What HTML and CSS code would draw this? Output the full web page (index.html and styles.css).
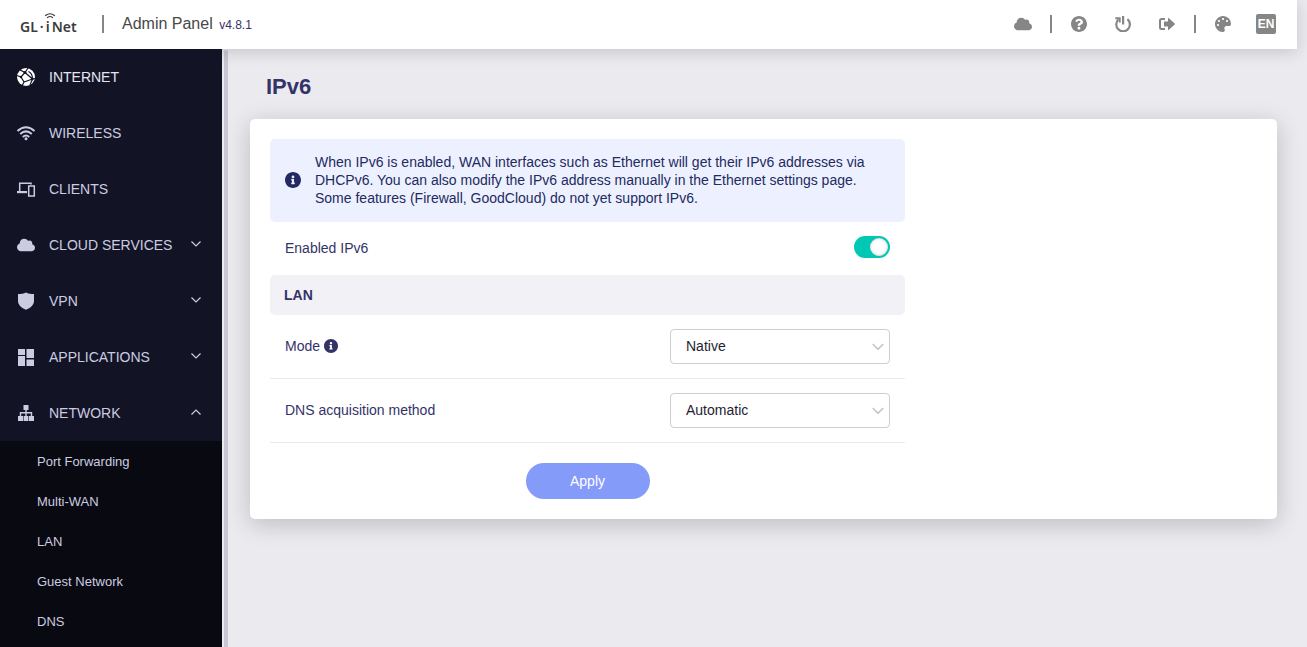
FILE: index.html
```html
<!DOCTYPE html>
<html lang="en">
<head>
<meta charset="utf-8">
<title>GL-iNet Admin Panel</title>
<link rel="stylesheet" href="styles.css">
</head>
<body>
<svg class="sprite" aria-hidden="true">
  <symbol id="cloud" viewBox="0 0 640 512"><path d="M537.6 226.6c4.1-10.7 6.4-22.4 6.4-34.6 0-53-43-96-96-96-19.7 0-38.1 6-53.3 16.2C367 64.2 315.3 32 256 32c-88.4 0-160 71.6-160 160 0 2.7.1 5.4.2 8.1C40.2 219.8 0 273.2 0 336c0 79.5 64.5 144 144 144h368c70.7 0 128-57.3 128-128 0-61.9-44-113.6-102.4-125.4z"/></symbol>
  <symbol id="info" viewBox="8 8 496 496"><path d="M256 8C119.043 8 8 119.083 8 256c0 136.997 111.043 248 248 248s248-111.003 248-248C504 119.083 392.957 8 256 8zm0 110c23.196 0 42 18.804 42 42s-18.804 42-42 42-42-18.804-42-42 18.804-42 42-42zm56 254c0 6.627-5.373 12-12 12h-88c-6.627 0-12-5.373-12-12v-24c0-6.627 5.373-12 12-12h12v-64h-12c-6.627 0-12-5.373-12-12v-24c0-6.627 5.373-12 12-12h64c6.627 0 12 5.373 12 12v100h12c6.627 0 12 5.373 12 12v24z"/></symbol>
  <symbol id="down" viewBox="0 0 12 12"><path d="M1.5 3.5 6 8l4.500-4.500" fill="none" stroke="currentColor" stroke-width="1.200"/></symbol>
  <symbol id="up" viewBox="0 0 12 12"><path d="M1.500 8.500 6 4l4.500 4.500" fill="none" stroke="currentColor" stroke-width="1.200"/></symbol>
</svg>

<header class="topbar">
  <a class="logo" href="#" aria-label="GL-iNet">
    <span>GL</span><span>·</span><span>i</span><span>Net</span>
    <svg class="logo-waves" viewBox="0 0 12 6" fill="none" stroke="currentColor" stroke-linecap="round"><path d="M1.500 2.500Q6-1 10.500 2.500" stroke-width="1.200"/><path d="M3.500 4.500Q6 2.500 8.500 4.500" stroke-width="1.200"/></svg>
  </a>
  <span class="divider"></span>
  <p class="product">Admin Panel <small>v4.8.1</small></p>
  <div class="tools">
    <button class="tool" aria-label="Cloud"><svg class="tool-cloud"><use href="#cloud"/></svg></button>
    <span class="tool-divider"><span class="divider"></span></span>
    <button class="tool" aria-label="Help"><svg viewBox="8 8 496 496"><path d="M504 256c0 136.997-111.043 248-248 248S8 392.997 8 256C8 119.083 119.043 8 256 8s248 111.083 248 248zM262.655 90c-54.497 0-89.255 22.957-116.549 63.758-3.536 5.286-2.353 12.415 2.715 16.258l34.699 26.31c5.205 3.947 12.621 3.008 16.665-2.122 17.864-22.658 30.113-35.797 57.303-35.797 20.429 0 45.698 13.148 45.698 32.958 0 14.976-12.363 22.667-32.534 33.976C247.128 238.528 216 254.941 216 296v4c0 6.627 5.373 12 12 12h56c6.627 0 12-5.373 12-12v-1.333c0-28.462 83.186-29.647 83.186-106.667 0-58.002-60.165-102-116.531-102zM256 338c-25.365 0-46 20.635-46 46 0 25.364 20.635 46 46 46s46-20.636 46-46c0-25.365-20.635-46-46-46z"/></svg></button>
    <button class="tool" aria-label="Reboot"><svg viewBox="0 0 16 16"><path d="M3.400 3.500A6.800 6.800 0 1 0 12.400 3.200" fill="none" stroke="currentColor" stroke-width="2.200"/><path d="M.3 1.300h5.400v5.200H3.800V3.200H.3z"/><path d="M7 0h2.200v8.500H7z"/></svg></button>
    <button class="tool" aria-label="Log out"><svg viewBox="0 0 16 16"><path d="M6 3H2.500A1.500 1.500 0 0 0 1 4.500v7A1.500 1.500 0 0 0 2.500 13H6" fill="none" stroke="currentColor" stroke-width="2"/><path d="M5 5.500h4V2.600c0-.6.6-.8 1-.4l5.700 5.300c.3.300.3.700 0 1L10 13.800c-.4.400-1 .2-1-.4v-2.900H5z"/></svg></button>
    <span class="tool-divider"><span class="divider"></span></span>
    <button class="tool" aria-label="Theme"><svg viewBox="0 0 512 512"><path d="M204.300 5C104.900 24.400 24.800 104.300 5.200 203.400c-37 187 131.700 326.400 258.800 306.700 41.200-6.400 61.400-54.600 42.500-91.700-23.100-45.400 9.900-98.400 60.900-98.400h79.700c35.800 0 64.800-29.600 64.900-65.300C511.500 97.100 368.100-26.900 204.300 5zM96 320c-17.700 0-32-14.300-32-32s14.300-32 32-32 32 14.300 32 32-14.300 32-32 32zm32-128c-17.700 0-32-14.300-32-32s14.300-32 32-32 32 14.300 32 32-14.300 32-32 32zm128-64c-17.700 0-32-14.300-32-32s14.300-32 32-32 32 14.300 32 32-14.300 32-32 32zm128 64c-17.700 0-32-14.300-32-32s14.300-32 32-32 32 14.300 32 32-14.300 32-32 32z"/></svg></button>
    <button class="tool tool-lang" aria-label="Language: EN"><span class="lang">EN</span></button>
  </div>
</header>

<div class="shell">
  <nav class="sidebar">
    <a class="item item-bright" href="#"><svg class="item-icon" viewBox="0 0 20 20"><circle cx="10" cy="10" r="9"/><g fill="none" stroke="#121426" stroke-width="1.200"><path d="M1 8.500 5 10l4-4.500L4 3M9 5.500 12 1M9 5.500 16.500 12 19 11.500M16.500 12 8 15l-3-5M8 15l-2 4M16.500 12 14 18M12.500 4.500Q16.500 6.500 16.500 12"/></g><g fill="#121426"><circle cx="9" cy="5.500" r="1.500"/><circle cx="5" cy="10" r="1.200"/><circle cx="16.300" cy="12" r="1.400"/></g></svg><span>INTERNET</span></a>
    <a class="item" href="#"><svg class="item-icon" viewBox="0 0 20 20"><g fill="none" stroke="currentColor" stroke-width="2"><path d="M1.500 8Q10 .500 18.500 8"/><path d="M4.200 11Q10 5.800 15.800 11"/><path d="M6.800 14Q10 11 13.200 14"/></g><circle cx="10" cy="15.800" r="1.500"/></svg><span>WIRELESS</span></a>
    <a class="item" href="#"><svg class="item-icon" viewBox="0 0 20 20"><path d="M3.700 12.500V4.200H15v1.300" fill="none" stroke="currentColor" stroke-width="1.500"/><path d="M1 12h10v2.200H1z"/><path d="M12.700 7h5.600v10h-5.600z" fill="none" stroke="currentColor" stroke-width="1.500"/></svg><span>CLIENTS</span></a>
    <a class="item" href="#"><svg class="item-icon item-cloud"><use href="#cloud"/></svg><span>CLOUD SERVICES</span><svg class="caret"><use href="#down"/></svg></a>
    <a class="item" href="#"><svg class="item-icon" viewBox="0 0 20 20"><path d="M10 1.500c2.200 1 5 1.500 8 1.500v7c0 4-3.500 7.200-8 8.800C5.500 17.200 2 14 2 10V3c3 0 5.800-.5 8-1.500z"/></svg><span>VPN</span><svg class="caret"><use href="#down"/></svg></a>
    <a class="item" href="#"><svg class="item-icon" viewBox="0 0 20 20"><path d="M2 2h7v6H2zM2 9h7v10H2zM10.500 2H18v9h-7.500zM10.500 12.500H18V19h-7.500z"/></svg><span>APPLICATIONS</span><svg class="caret"><use href="#down"/></svg></a>
    <a class="item" href="#"><svg class="item-icon" viewBox="0 0 20 20"><path d="M7.500 2h5v5h-5zM2 13h5v5H2zM7.600 13h4.800v5H7.600zM13 13h5v5h-5z"/><path d="M10 6v7M4.500 13.500v-3.800h11v3.800" fill="none" stroke="currentColor" stroke-width="1.400"/></svg><span>NETWORK</span><svg class="caret"><use href="#up"/></svg></a>
    <div class="submenu">
      <a href="#">Port Forwarding</a>
      <a href="#">Multi-WAN</a>
      <a href="#">LAN</a>
      <a href="#">Guest Network</a>
      <a href="#">DNS</a>
    </div>
  </nav>
  <div class="scrollbar"></div>

  <main class="content">
    <h1>IPv6</h1>
    <section class="card">
      <form class="settings">
        <div class="notice">
          <svg class="notice-icon"><use href="#info"/></svg>
          <p>When IPv6 is enabled, WAN interfaces such as Ethernet will get their IPv6 addresses via DHCPv6. You can also modify the IPv6 address manually in the Ethernet settings page. Some features (Firewall, GoodCloud) do not yet support IPv6.</p>
        </div>
        <div class="row row-switch">
          <label for="enabled">Enabled IPv6</label>
          <input class="switch" id="enabled" type="checkbox" role="switch" checked>
        </div>
        <h2>LAN</h2>
        <div class="row row-lined">
          <label for="mode">Mode <svg class="hint"><use href="#info"/></svg></label>
          <div class="select">
            <select id="mode"><option>Native</option></select>
            <svg><use href="#down"/></svg>
          </div>
        </div>
        <div class="row row-lined">
          <label for="dns">DNS acquisition method</label>
          <div class="select">
            <select id="dns"><option>Automatic</option></select>
            <svg><use href="#down"/></svg>
          </div>
        </div>
        <button class="apply" type="button">Apply</button>
      </form>
    </section>
  </main>
</div>
</body>
</html>
```

FILE: styles.css
```css
* { box-sizing: border-box; }
body {
  margin: 0;
  height: 100vh;
  display: flex;
  flex-direction: column;
  overflow: hidden;
  background: #ebeaef;
  color: #343368;
  font: 14px/18px "Liberation Sans", Arial, sans-serif;
}
a { color: inherit; text-decoration: none; }
p, h1, h2 { margin: 0; }
svg { fill: currentColor; flex: none; }
button, select { font: inherit; }
.sprite { display: none; }

.topbar {
  display: flex;
  align-items: center;
  flex: none;
  height: 49px;
  margin-right: 10px;
  padding: 0 10px 1px 20px;
  background: #fff;
  box-shadow: 0 3px 16px rgba(0, 0, 0, .16);
  z-index: 1;
}
.logo {
  position: relative;
  display: flex;
  gap: 2px;
  width: 82px;
  padding-top: 5px;
  color: #3c3c3c;
  font: 600 14px/20px "Noto Sans", "Open Sans", sans-serif;
}
.logo-waves {
  position: absolute;
  left: 24px;
  top: 1px;
  width: 12px;
  height: 6px;
  fill: none;
}
.divider { width: 2px; height: 18px; background: #868686; }
.product { margin-left: 18px; color: #484848; font-size: 16px; }
.product small { margin-left: 2px; color: #343368; font-size: 12px; }
.tools { display: flex; align-items: center; margin-left: auto; }
.tool {
  display: flex;
  justify-content: center;
  width: 44px;
  padding: 0;
  border: 0;
  background: none;
  color: #868686;
}
.tool svg { width: 16px; height: 16px; }
.tool .tool-cloud { width: 18px; }
.tool-lang { width: 42px; }
.tool-divider { display: flex; justify-content: center; width: 12px; }
.lang {
  width: 20px;
  border-radius: 2px;
  background: #868686;
  color: #fff;
  font-size: 12px;
  font-weight: 700;
  line-height: 20px;
}

.shell { display: flex; flex: 1; min-height: 0; }
.sidebar {
  display: flex;
  flex-direction: column;
  width: 222px;
  flex: none;
  overflow: hidden;
  background: #121426;
  color: #cccce0;
  z-index: 2;
}
.item {
  display: flex;
  flex: none;
  align-items: center;
  gap: 13px;
  height: 56px;
  padding: 0 20px 0 16px;
}
.item-bright { color: #fff; }
.item-bright span { color: #e6e6f0; }
.item-icon { width: 20px; height: 20px; }
.item-cloud { padding: 0 1px; }
.caret { width: 12px; height: 12px; margin: 0 0 2px auto; }
.submenu { flex: 1; padding-top: 1px; background: #080911; font-size: 13px; }
.submenu a { display: block; padding: 0 37px; line-height: 40px; }
.scrollbar {
  width: 4px;
  flex: none;
  margin: 1px 0 0 2px;
  border-radius: 2px 2px 0 0;
  background: #c8c8d4;
}

.content { flex: 1; min-width: 0; padding: 25px 30px 30px 22px; }
h1 { padding-left: 16px; font-size: 22px; line-height: 26px; }
.card {
  margin-top: 19px;
  padding: 20px;
  border-radius: 5px;
  background: #fff;
  box-shadow: 0 5px 25px rgba(0, 0, 0, .2);
}
.settings { display: flex; flex-direction: column; max-width: 635px; }
.notice {
  display: flex;
  align-items: center;
  gap: 14px;
  padding: 14px 15px 15px;
  border-radius: 5px;
  background: #edf1ff;
  color: #222a60;
}
.notice-icon { width: 16px; height: 16px; }
.row {
  display: flex;
  align-items: center;
  justify-content: space-between;
  padding: 14px 15px;
}
.row-switch { padding: 14px 15px 17px; }
.row-lined { border-bottom: 1px solid #e9e9ef; }
.row label { display: flex; align-items: center; gap: 4px; }
.row-switch label { padding-top: 2px; }
.row-lined label { padding-bottom: 2px; }
.hint { width: 14px; height: 14px; }
.switch {
  appearance: none;
  display: flex;
  justify-content: flex-end;
  width: 36px;
  height: 22px;
  margin: 0;
  padding: 2px;
  border-radius: 11px;
  background: #00c8b3;
}
.switch::before {
  content: "";
  width: 18px;
  height: 18px;
  border-radius: 50%;
  background: #fff;
  box-shadow: inset 0 0 3px rgba(0, 0, 0, .25);
}
.switch:not(:checked) { justify-content: flex-start; background: #c8c8d4; }
h2 {
  padding: 0 14px;
  border-radius: 5px;
  background: #f2f1f6;
  font-size: 14px;
  line-height: 40px;
}
.select { display: grid; width: 220px; align-items: center; }
.select select, .select svg { grid-area: 1 / 1; }
.select select {
  appearance: none;
  height: 35px;
  padding: 0 15px 2px;
  border: 1px solid #cdcdd2;
  border-radius: 4px;
  background: #fff;
  color: #1e1e32;
}
.select svg {
  justify-self: end;
  width: 14px;
  height: 14px;
  margin-right: 5px;
  color: #c0c0cc;
  pointer-events: none;
}
.apply {
  align-self: center;
  width: 124px;
  height: 36px;
  margin-top: 20px;
  border: 0;
  border-radius: 18px;
  background: #859bfa;
  color: #fff;
}
```
